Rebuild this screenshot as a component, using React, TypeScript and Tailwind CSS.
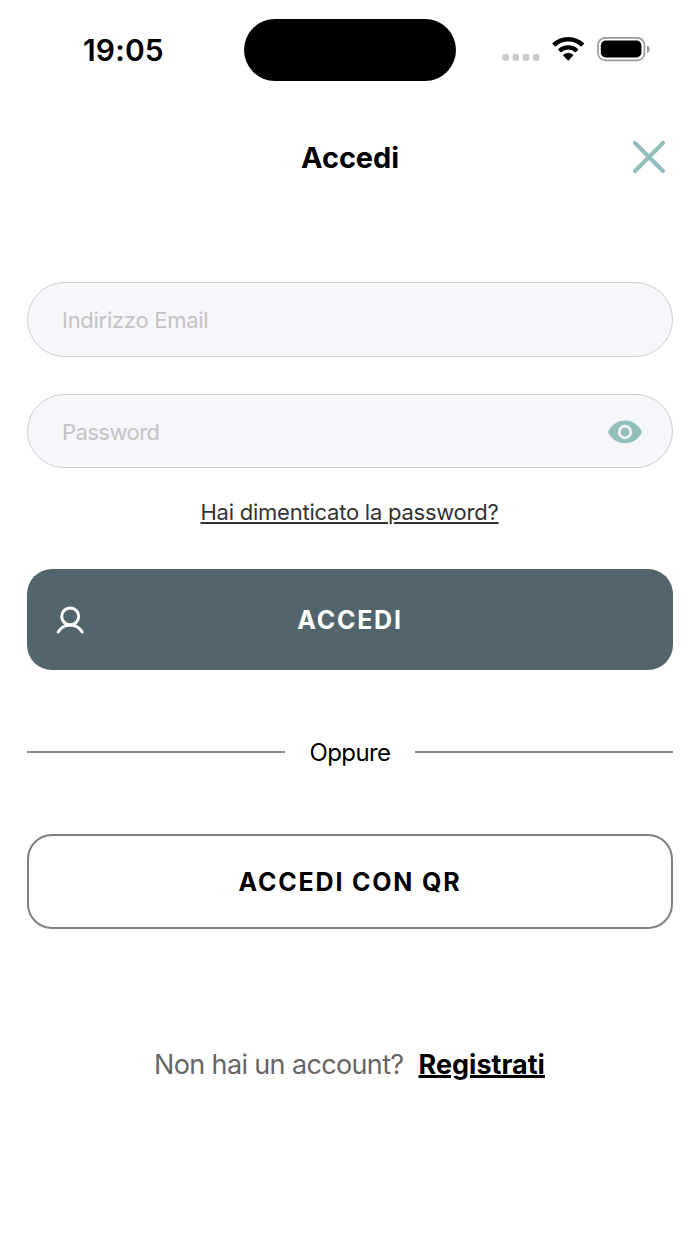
import React from "react";

const StatusBar = () => {
  return (
    <div className="h-[100px] pt-[19px] flex items-start">
      <div className="w-[244px] h-[62px] pl-[83px] flex items-center text-[30px] font-semibold tracking-[0.15px]">
        19:05
      </div>
      <div className="w-[212px] h-[62px] rounded-full bg-black"></div>
      <div className="flex-1 h-[62px] pl-[46px] flex items-center">
        <svg width="150" height="32" viewBox="0 0 150 32" fill="none">
          <g fill="#cbcbcb">
            <rect x="0.3" y="20" width="6.6" height="6.8" rx="2" />
            <rect x="10.5" y="20" width="6.6" height="6.8" rx="2" />
            <rect x="20.7" y="20" width="6.6" height="6.8" rx="2" />
            <rect x="30.9" y="20" width="6.6" height="6.8" rx="2" />
          </g>
          <g transform="translate(50.2 2.8)">
            <path
              d="M16 23.6 L21 18.4 A7.4 7.4 0 0 0 11 18.4 Z"
              fill="black"
              stroke="black"
              strokeWidth="0.6"
              strokeLinejoin="round"
            />
            <path d="M7.2 14.2 A12.7 12.7 0 0 1 24.8 14.2" stroke="black" strokeWidth="4.2" />
            <path d="M1.5 8.4 A20.6 20.6 0 0 1 30.5 8.4" stroke="black" strokeWidth="4.6" />
          </g>
          <rect x="96" y="3.8" width="46.5" height="22.6" rx="7.4" stroke="#9b9b9b" strokeWidth="1.7" />
          <rect x="98.8" y="6.6" width="40.6" height="16.8" rx="5" fill="black" />
          <path d="M145 11.4 C148.6 12.6 148.6 17.8 145 19 Z" fill="#9b9b9b" />
        </svg>
      </div>
    </div>
  );
};

const Header = () => {
  return (
    <header className="h-[115px] px-[34px] grid grid-cols-[1fr_auto_1fr] items-center">
      <h1 className="col-start-2 pt-px text-[29px] font-bold tracking-[-0.1px]">Accedi</h1>
      <button className="justify-self-end mb-px" aria-label="Chiudi">
        <svg width="34" height="34" viewBox="0 0 34 34" fill="none">
          <path d="M3 3L31 31M31 3L3 31" stroke="#92bfbb" strokeWidth="4.2" strokeLinecap="round" />
        </svg>
      </button>
    </header>
  );
};

const inputClass =
  "min-w-0 flex-1 pt-[2px] bg-transparent text-[22px] outline-none placeholder:text-[#c3c3c3]";

const App = () => {
  return (
    <div className="w-[700px] h-[1244px] bg-white text-black overflow-hidden font-[Inter,sans-serif]">
      <StatusBar />
      <Header />
      <main className="px-[27px] pt-[67px] flex flex-col">
        <div className="h-[75px] rounded-full border border-[#cfcfcf] bg-[#f6f6fb] flex items-center pl-[34px] pr-[30px]">
          <input type="email" placeholder="Indirizzo Email" className={`${inputClass} tracking-[-0.28px]`} />
        </div>
        <div className="mt-[37px] h-[74px] rounded-full border border-[#cfcfcf] bg-[#f6f6fb] flex items-center pl-[34px] pr-[30px]">
          <input type="password" placeholder="Password" className={`${inputClass} tracking-[-0.55px]`} />
          <svg width="34" height="24" viewBox="0 0 34 24" className="mt-[2px]">
            <path
              d="M17 0.5 C25 0.5 30.5 5.5 33.4 10.6 Q34.3 12 33.4 13.4 C30.5 18.2 25 23.2 17 23.2 C9 23.2 3.5 18.2 0.6 13.4 Q-0.3 12 0.6 10.6 C3.5 5.5 9 0.5 17 0.5 Z"
              fill="#92bfbb"
            />
            <circle cx="17" cy="12" r="5.8" fill="#92bfbb" stroke="#f6f6fb" strokeWidth="2.7" />
          </svg>
        </div>
        <a
          href="#password"
          className="mt-[28px] mr-px self-center text-[22px] leading-[32px] tracking-[-0.24px] text-[#333333] underline decoration-[1.5px] underline-offset-[2px]"
        >
          Hai dimenticato la password?
        </a>
        <button className="mt-[41px] h-[101px] rounded-[25px] bg-[#52656c] text-white grid grid-cols-[1fr_auto_1fr] items-center px-[29px]">
          <svg width="29" height="29" viewBox="0 0 29 29" fill="none" stroke="white" strokeWidth="3" strokeLinecap="round" className="mt-px">
            <circle cx="14.2" cy="10.4" r="8.5" />
            <path d="M2.2 26 C4.6 22 9 18.9 14.2 18.9 C19.4 18.9 23.8 22 26.2 26" />
          </svg>
          <span className="pt-[2px] text-[25px] font-bold tracking-[1.75px]">ACCEDI</span>
        </button>
        <div className="mt-[62px] h-[40px] flex items-center">
          <div className="flex-1 h-[2px] bg-[#8a8a8a]"></div>
          <span className="w-[130px] pt-[2px] text-center text-[24px] tracking-[-0.6px]">Oppure</span>
          <div className="flex-1 h-[2px] bg-[#8a8a8a]"></div>
        </div>
        <button className="mt-[62px] h-[95px] pt-[2px] rounded-[25px] border-2 border-[#7f7f7f] text-[25px] font-bold tracking-[1.8px]">
          ACCEDI CON QR
        </button>
        <div className="mt-[115px] mr-px h-[40px] flex items-center justify-center gap-[15px] text-[27px]">
          <span className="pt-[2px] text-[#666666] tracking-[-0.64px]">Non hai un account?</span>
          <a href="#registrati" className="pt-[2px] font-bold underline decoration-[2.5px] underline-offset-[1px]">
            Registrati
          </a>
        </div>
      </main>
    </div>
  );
};

export default App;
